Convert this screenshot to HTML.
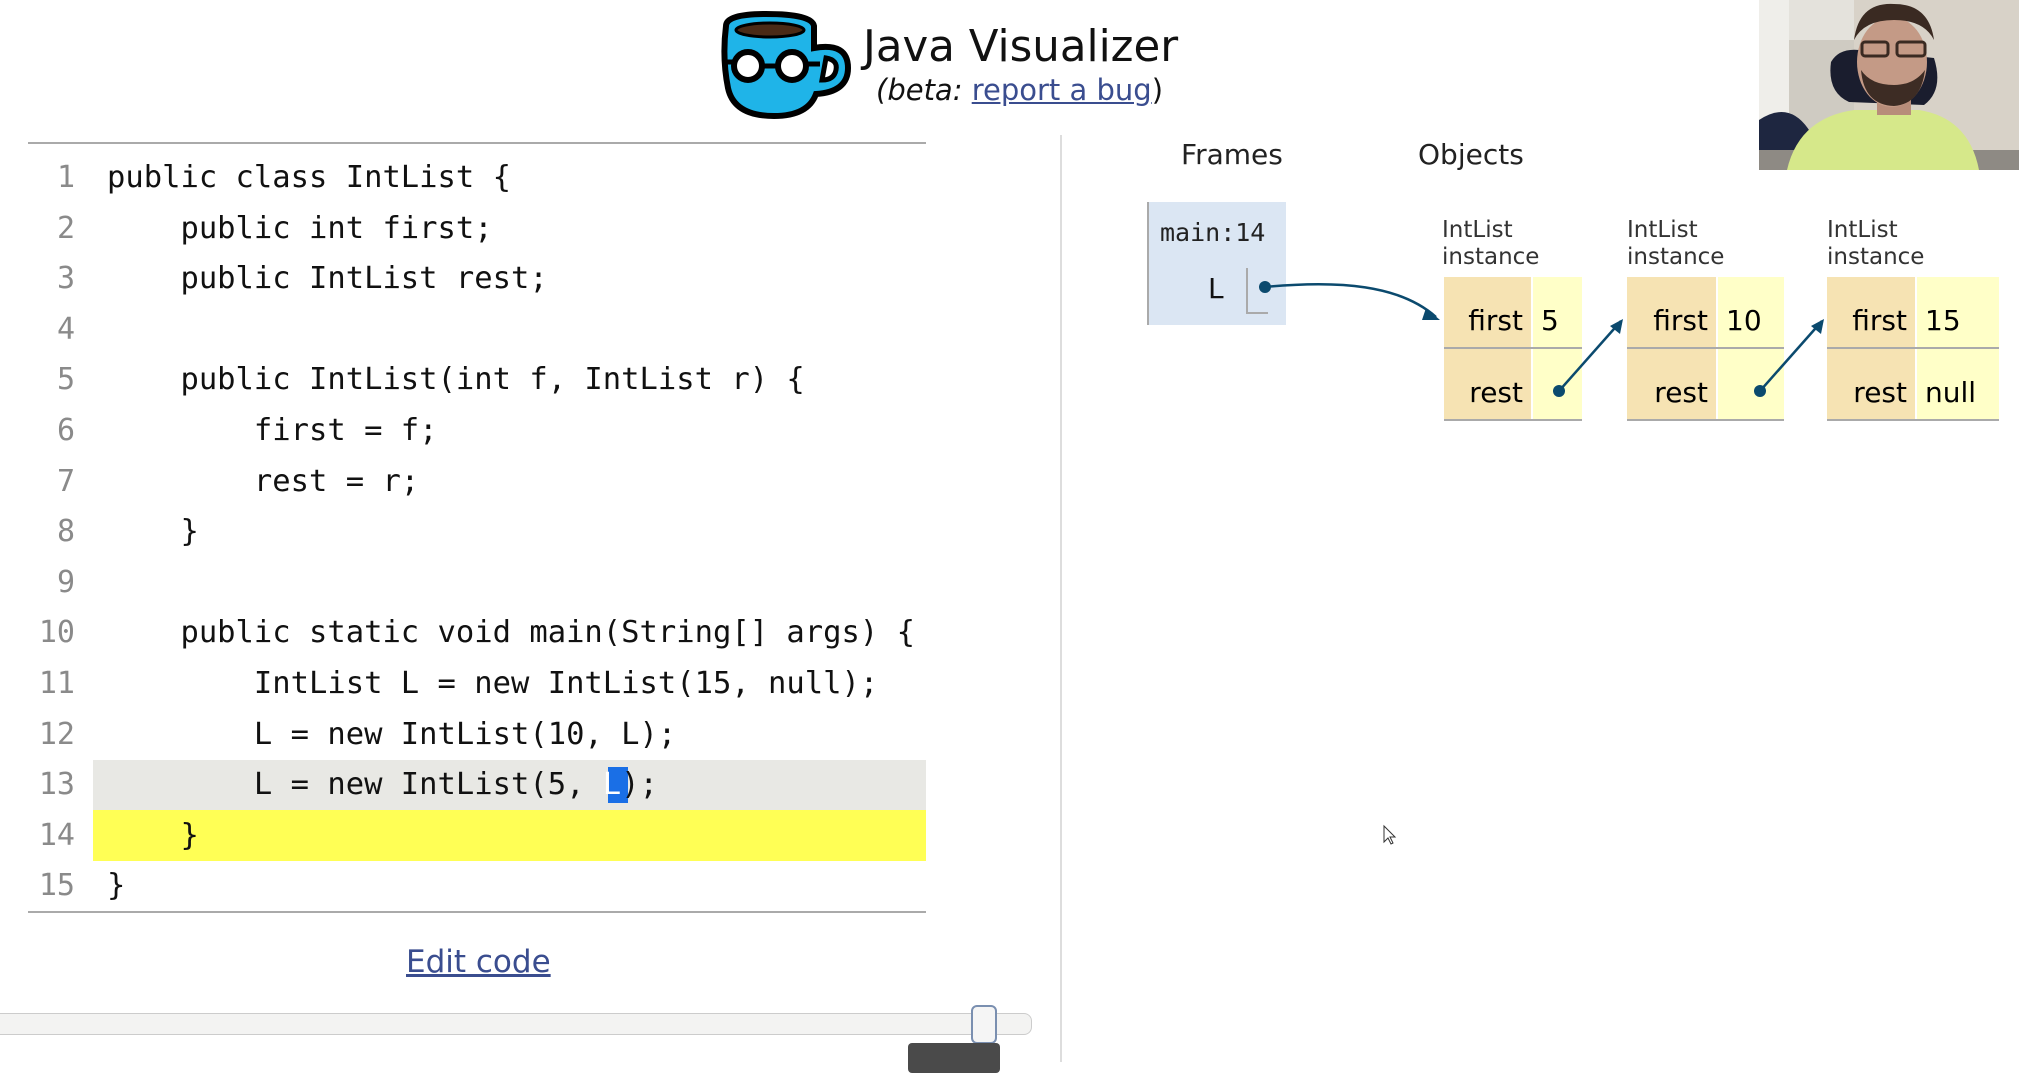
<!DOCTYPE html>
<html><head><meta charset="utf-8"><style>
body{margin:0;width:2019px;height:1062px;background:#fff;position:relative;overflow:hidden;font-family:"DejaVu Sans","Liberation Sans",sans-serif}
.a{position:absolute}
.ln{position:absolute;left:0;width:75px;text-align:right;color:#8a8a8a;font-family:"DejaVu Sans Mono","Liberation Mono",monospace;font-size:30px;line-height:50.6px}
.cd{position:absolute;left:107px;font-family:"DejaVu Sans Mono","Liberation Mono",monospace;font-size:30.5px;line-height:50.6px;color:#111;white-space:pre}
.obj td{font-size:28px;height:60px;border-bottom:2px solid #aaa;padding:0;vertical-align:bottom;padding-bottom:10px}
.nm{background:#f6e3b3;text-align:right;padding-right:8px!important}
.vl{background:#ffffc8;padding-left:8px!important;border-left:2px solid #fff}
.lab{font-size:23px;color:#333;line-height:27px}
</style></head><body>
<svg class="a" style="left:716px;top:8px" width="140" height="112" viewBox="0 0 140 112">
<path d="M10 18 Q10 6 50 6 Q96 6 98 18 L98 40 Q132 34 132 60 Q132 84 100 86 Q92 108 58 108 Q18 108 12 80 Q6 50 10 18Z" fill="#1fb4e8" stroke="#000" stroke-width="6"/>
<ellipse cx="54" cy="22" rx="34" ry="7" fill="#4a2a16" stroke="#000" stroke-width="3"/>
<path d="M110 50 Q122 52 120 62 Q118 72 106 72Z" fill="#fff" stroke="#000" stroke-width="5"/>
<circle cx="32" cy="58" r="14" fill="#fff" stroke="#000" stroke-width="6"/>
<circle cx="76" cy="58" r="14" fill="#fff" stroke="#000" stroke-width="6"/>
<path d="M46 58 H62 M6 54 H18 M90 56 H104" stroke="#000" stroke-width="5"/>
</svg>
<div class="a" style="left:863px;top:22px;font-size:43.5px;color:#111">Java Visualizer</div>
<div class="a" style="left:876px;top:73px;font-size:29px;color:#111"><i>(beta:</i> <span style="color:#3a4d8f;text-decoration:underline">report a bug</span>)</div>
<div class="a" style="left:28px;top:142px;width:898px;height:2px;background:#aaa"></div>
<div class="a" style="left:28px;top:911px;width:898px;height:2px;background:#aaa"></div>
<div class="a" style="left:93px;top:760px;width:833px;height:50px;background:#e8e8e4"></div>
<div class="a" style="left:93px;top:810px;width:833px;height:51px;background:#ffff55"></div>
<div class="a" style="left:608px;top:767px;width:20px;height:36px;background:#1a6fe6"></div>
<div class="ln" style="top:153px">1<br>2<br>3<br>4<br>5<br>6<br>7<br>8<br>9<br>10<br>11<br>12<br>13<br>14<br>15</div>
<div class="cd" style="top:153px">public class IntList {
    public int first;
    public IntList rest;

    public IntList(int f, IntList r) {
        first = f;
        rest = r;
    }

    public static void main(String[] args) {
        IntList L = new IntList(15, null);
        L = new IntList(10, L);
        L = new IntList(5, <span style="color:#fff">L</span>);
    }
}</div>
<div class="a" style="left:406px;top:944px;font-size:31px;color:#3a4d8f;text-decoration:underline">Edit code</div>
<div class="a" style="left:-10px;top:1013px;width:1040px;height:20px;background:#f3f3f2;border:1px solid #ccc;border-radius:8px"></div>
<div class="a" style="left:971px;top:1005px;width:22px;height:35px;background:#f5f5f5;border:2px solid #7a8fb0;border-radius:6px"></div>
<div class="a" style="left:908px;top:1043px;width:92px;height:30px;background:#4a4a4a;border-radius:4px"></div>
<div class="a" style="left:1060px;top:135px;width:2px;height:927px;background:#ddd"></div>
<div class="a" style="left:1181px;top:138px;font-size:28px;color:#222">Frames</div>
<div class="a" style="left:1418px;top:138px;font-size:28px;color:#222">Objects</div>
<div class="a" style="left:1147px;top:202px;width:137px;height:123px;background:#dbe6f3;border-left:2px solid #aaa"></div>
<div class="a" style="left:1160px;top:218px;font-family:'DejaVu Sans Mono',monospace;font-size:25px;color:#222">main:14</div>
<div class="a" style="left:1208px;top:272px;font-size:28px;color:#111">L</div>
<div class="a" style="left:1246px;top:268px;width:20px;height:44px;border-left:2px solid #aaa;border-bottom:2px solid #aaa"></div>
<div class="a lab" style="left:1442px;top:217px">IntList<br>instance</div>
<div class="a lab" style="left:1627px;top:217px">IntList<br>instance</div>
<div class="a lab" style="left:1827px;top:217px">IntList<br>instance</div>
<table class="a obj" style="left:1444px;top:277px;border-collapse:collapse"><tr><td class="nm" style="width:79px">first</td><td class="vl" style="width:41px">5</td></tr><tr><td class="nm">rest</td><td class="vl"></td></tr></table>
<table class="a obj" style="left:1627px;top:277px;border-collapse:collapse"><tr><td class="nm" style="width:81px">first</td><td class="vl" style="width:58px">10</td></tr><tr><td class="nm">rest</td><td class="vl"></td></tr></table>
<table class="a obj" style="left:1827px;top:277px;border-collapse:collapse"><tr><td class="nm" style="width:80px">first</td><td class="vl" style="width:74px">15</td></tr><tr><td class="nm">rest</td><td class="vl">null</td></tr></table>
<svg class="a" style="left:0;top:0" width="2019" height="1062">
<g stroke="#0b4a6e" stroke-width="2.5" fill="none">
<path d="M1265 287 C1340 280 1400 285 1436 317"/>
<path d="M1559 391 L1621 321"/>
<path d="M1760 391 L1822 321"/>
</g>
<path d="M1426 308 L1440 320 L1422 320Z" fill="#0b4a6e"/>
<path d="M1610 326 L1623 319 L1620 334Z" fill="#0b4a6e"/>
<path d="M1811 326 L1824 319 L1821 334Z" fill="#0b4a6e"/>
<g fill="#0b4a6e"><circle cx="1265" cy="287" r="6"/><circle cx="1559" cy="391" r="6"/><circle cx="1760" cy="391" r="6"/></g>
<path d="M1384 826 v16 l4 -4 l3 6 l2 -1 l-3 -6 h5z" fill="#fff" stroke="#333"/>
</svg>
<svg class="a" style="left:1759px;top:0" width="260" height="170" viewBox="0 0 260 170">
<rect width="260" height="170" fill="#d8d2c8"/>
<rect x="0" y="0" width="95" height="170" fill="#e4e2dc"/>
<rect x="30" y="40" width="65" height="90" fill="#cfcbc2"/>
<rect x="0" y="0" width="30" height="125" fill="#efeeea"/>
<rect x="0" y="150" width="260" height="20" fill="#8e8a84"/>
<path d="M0 120 Q30 100 50 130 L50 150 L0 150Z" fill="#1e2640"/>
<path d="M72 62 Q80 48 100 50 L175 58 Q185 90 165 105 L90 102 Q68 92 72 62Z" fill="#1a1d2e"/>
<path d="M28 170 Q40 118 95 110 L160 110 Q210 118 220 170Z" fill="#d6e88a"/>
<rect x="118" y="85" width="34" height="30" fill="#b88d7a"/>
<ellipse cx="133" cy="62" rx="35" ry="45" fill="#c49a86"/>
<path d="M95 40 Q100 2 135 4 Q170 4 175 40 Q165 20 135 20 Q105 20 95 40Z" fill="#3a2a22"/>
<path d="M102 70 Q105 105 135 106 Q162 104 166 70 Q155 85 135 85 Q112 85 102 70Z" fill="#3d2c24"/>
<rect x="103" y="42" width="26" height="14" rx="3" fill="none" stroke="#3a2a22" stroke-width="3"/>
<rect x="138" y="42" width="28" height="14" rx="3" fill="none" stroke="#3a2a22" stroke-width="3"/>
</svg>
</body></html>
